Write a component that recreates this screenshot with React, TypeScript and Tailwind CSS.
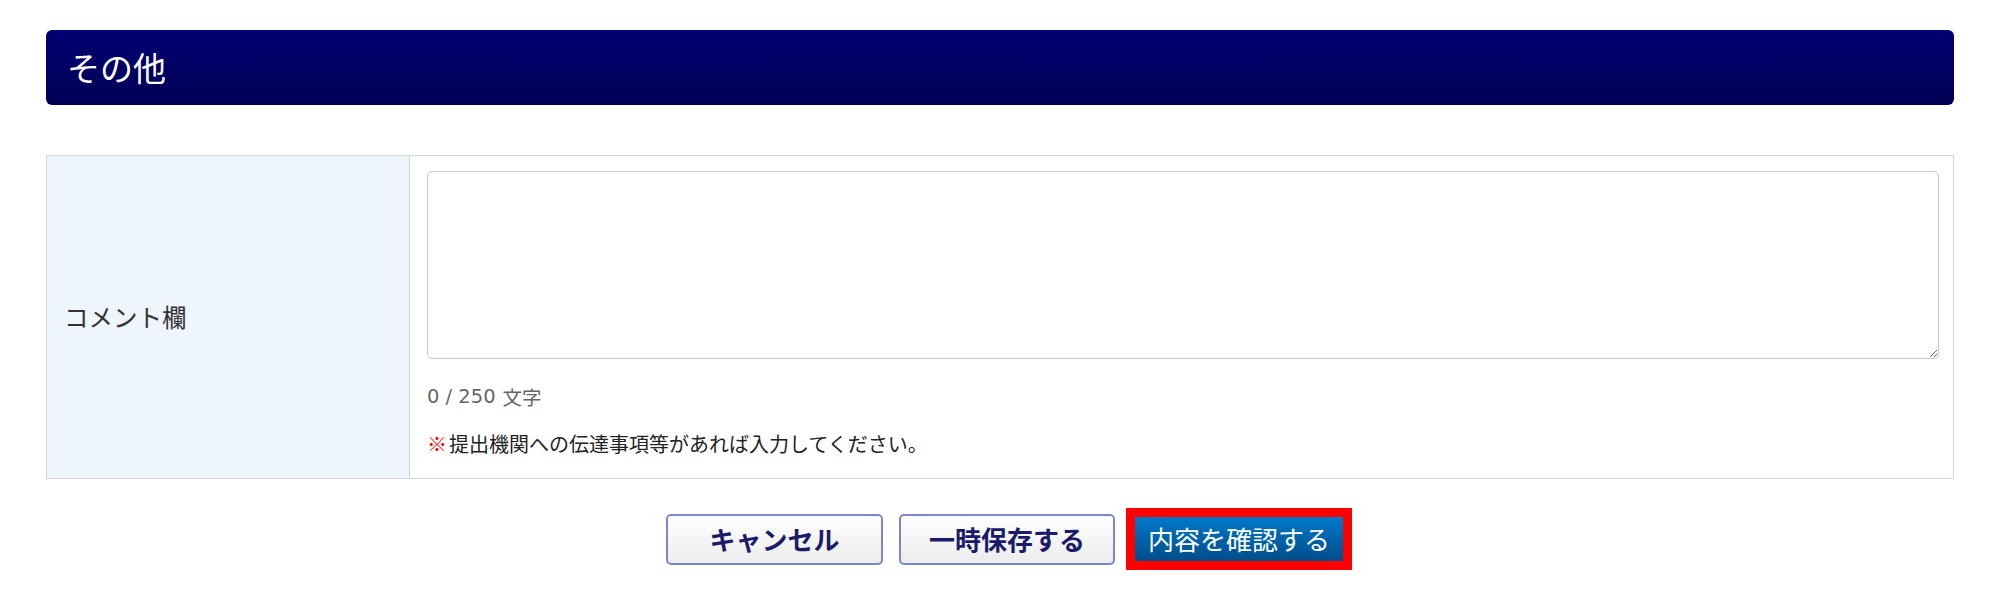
import React from "react";

export default function App() {
  const font = {
    fontFamily: '"Noto Sans CJK JP", "Noto Sans", sans-serif',
  } as React.CSSProperties;
  const counterFont = {
    fontFamily: '"DejaVu Sans", "Noto Sans CJK JP", sans-serif',
  } as React.CSSProperties;
  return (
    <div
      className="w-[2000px] h-[598px] bg-white px-[46px] pt-[30px] overflow-hidden"
      style={font}
    >
      <div className="h-[75px] rounded-[6px] bg-gradient-to-b from-[#000072] to-[#000056] flex items-center pl-[21px]">
        <span className="text-white text-[33px] leading-none">その他</span>
      </div>

      <div className="mt-[50px] flex border border-[#d6d6d6] h-[324px]">
        <div className="w-[363px] shrink-0 bg-[#eef5fd] border-r border-[#cdd5de] flex items-center pl-[17px]">
          <span className="text-[24.5px] text-[#333333] leading-none">コメント欄</span>
        </div>
        <div className="flex-1 pl-[17px] pr-[14px] pt-[15px] flex flex-col">
          <textarea
            className="w-full h-[188px] border border-[#c8c8c8] rounded-[5px] bg-white outline-none resize-y"
          />
          <div
            className="mt-[24px] h-[28px] flex items-center text-[19.5px] text-[#666666] leading-none"
            style={counterFont}
          >
            <span>0 / 250</span>
            <span className="ml-[7px]" style={font}>文字</span>
          </div>
          <div className="mt-[19px] h-[28px] flex items-center text-[20px] text-[#222222] leading-none">
            <span className="text-[#ff0000] font-bold mr-[2px]">※</span>
            <span>提出機関への伝達事項等があれば入力してください。</span>
          </div>
        </div>
      </div>

      <div className="mt-[29px] flex justify-center items-center pl-[18px]">
        <button className="w-[217px] h-[51px] rounded-[5px] border-2 border-[#7b88c8] bg-gradient-to-b from-white to-[#ececec] text-[#1b1b6b] text-[26px] font-bold leading-none flex items-center justify-center">
          キャンセル
        </button>
        <button className="ml-[16px] w-[216px] h-[51px] rounded-[5px] border-2 border-[#7b88c8] bg-gradient-to-b from-white to-[#ececec] text-[#1b1b6b] text-[26px] font-bold leading-none flex items-center justify-center">
          一時保存する
        </button>
        <div className="ml-[11px] border-[9px] border-[#ff0000]">
          <button className="w-[208px] h-[44px] bg-gradient-to-b from-[#0079c9] to-[#004d8a] text-white text-[26px] leading-none flex items-center justify-center">
            内容を確認する
          </button>
        </div>
      </div>
    </div>
  );
}
